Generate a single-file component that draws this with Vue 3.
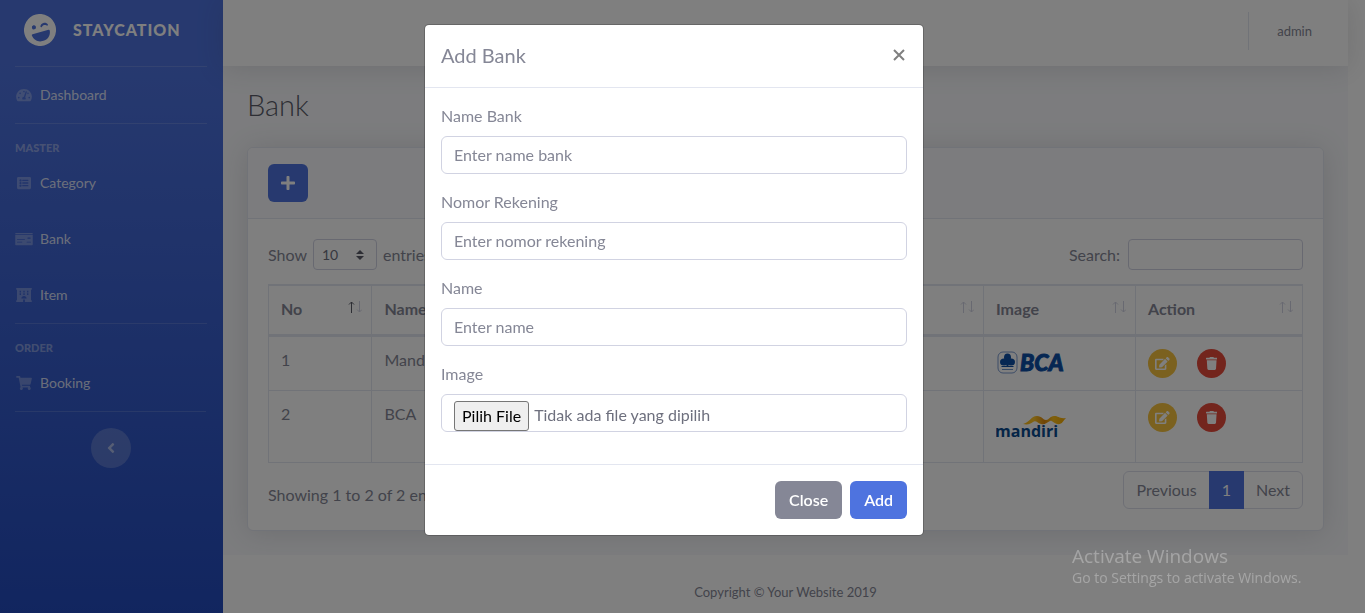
<script setup>
import { ref } from 'vue'

const icons = {
  gauge: { box: '0 0 576 512', d: 'M288 32C128.94 32 0 160.94 0 320c0 52.8 14.25 102.26 39.06 144.8 5.61 9.62 16.3 15.2 27.44 15.2h443c11.14 0 21.83-5.58 27.44-15.2C561.75 422.26 576 372.8 576 320c0-159.06-128.94-288-288-288zm0 64c14.71 0 26.58 10.13 30.32 23.65-1.11 2.26-2.64 4.23-3.45 6.67l-9.22 27.67c-5.13 3.49-10.97 6.01-17.64 6.01-17.67 0-32-14.33-32-32S270.33 96 288 96zM96 384c-17.67 0-32-14.33-32-32s14.33-32 32-32 32 14.33 32 32-14.33 32-32 32zm48-160c-17.67 0-32-14.33-32-32s14.33-32 32-32 32 14.33 32 32-14.33 32-32 32zm246.77-72.41l-61.33 184C343.13 347.33 352 364.54 352 384c0 11.72-3.38 22.55-8.88 32H232.88c-5.5-9.45-8.88-20.28-8.88-32 0-33.94 26.5-61.43 59.9-63.59l61.34-184.01c4.17-12.56 17.73-19.45 30.36-15.17 12.57 4.19 19.35 17.79 15.17 30.36zm14.66 57.2l15.52-46.55c3.47-1.29 7.13-2.23 11.05-2.23 17.67 0 32 14.33 32 32s-14.33 32-32 32c-11.38-.01-20.89-6.28-26.57-15.22zM480 384c-17.67 0-32-14.33-32-32s14.33-32 32-32 32 14.33 32 32-14.33 32-32 32z' },
  list: { box: '0 0 512 512', d: 'M48 32H464Q512 32 512 80V432Q512 480 464 480H48Q0 480 0 432V80Q0 32 48 32zM128 120a40 40 0 1 0 .1 0zM128 216a40 40 0 1 0 .1 0zM128 312a40 40 0 1 0 .1 0zM204 136H404Q416 136 416 148V172Q416 184 404 184H204Q192 184 192 172V148Q192 136 204 136zM204 232H404Q416 232 416 244V268Q416 280 404 280H204Q192 280 192 268V244Q192 232 204 232zM204 328H404Q416 328 416 340V364Q416 376 404 376H204Q192 376 192 364V340Q192 328 204 328z' },
  check: { box: '0 0 640 512', d: 'M24 32H616Q640 32 640 56V80H0V56Q0 32 24 32zM0 112H640V456Q640 480 616 480H24Q0 480 0 456zM448 208V240Q448 248 456 248H552Q560 248 560 240V208Q560 200 552 200H456Q448 200 448 208zM72 264H344Q352 264 352 272V280Q352 288 344 288H72Q64 288 64 280V272Q64 264 72 264zM72 360H248Q256 360 256 368V376Q256 384 248 384H72Q64 384 64 376V368Q64 360 72 360zM424 360H568Q576 360 576 368V376Q576 384 568 384H424Q416 384 416 376V368Q416 360 424 360z' },
  hotel: { box: '0 0 576 512', d: 'M16 0H560Q576 0 576 16V48Q576 64 560 64H544V448H560Q576 448 576 464V496Q576 512 560 512H320V432Q320 416 304 416H272Q256 416 256 432V512H16Q0 512 0 496V464Q0 448 16 448H32V64H16Q0 64 0 48V16Q0 0 16 0zM128 96V160H176V96zM264 96V160H312V96zM400 96V160H448V96zM128 192V256H176V192zM264 192V256H312V192zM400 192V256H448V192zM192 384H384C384 331 341 288 288 288S192 331 192 384z' },
  cart: { box: '0 0 576 512', d: 'M528.12 301.319l47.273-208C578.806 78.301 567.391 64 551.99 64H159.208l-9.166-44.81C147.758 8.021 137.93 0 126.529 0H24C10.745 0 0 10.745 0 24v16c0 13.255 10.745 24 24 24h69.883l70.248 343.435C147.325 417.1 136 435.222 136 456c0 30.928 25.072 56 56 56s56-25.072 56-56c0-15.674-6.447-29.835-16.824-40h209.647C430.447 426.165 424 440.326 424 456c0 30.928 25.072 56 56 56s56-25.072 56-56c0-22.172-12.888-41.332-31.579-50.405l5.517-24.276c3.413-15.018-8.002-29.319-23.403-29.319H218.117l-6.545-32h293.145c11.206 0 20.92-7.754 23.403-18.681z' },
  edit: { box: '0 0 576 512', d: 'M402.6 83.2l90.2 90.2c3.8 3.8 3.8 10 0 13.8L274.4 405.6l-92.8 10.3c-12.4 1.4-22.9-9.1-21.5-21.5l10.3-92.8L388.8 83.2c3.8-3.8 10-3.8 13.8 0zm162-22.9l-48.8-48.8c-15.2-15.2-39.9-15.2-55.2 0l-35.4 35.4c-3.8 3.8-3.8 10 0 13.8l90.2 90.2c3.8 3.8 10 3.8 13.8 0l35.4-35.4c15.2-15.3 15.2-40 0-55.2zM384 346.2V448H64V128h229.8c3.2 0 6.2-1.3 8.5-3.5l40-40c7.6-7.6 2.2-20.5-8.5-20.5H48C21.5 64 0 85.5 0 112v352c0 26.5 21.5 48 48 48h352c26.5 0 48-21.5 48-48V306.2c0-10.7-12.9-16-20.5-8.5l-40 40c-2.2 2.3-3.5 5.3-3.5 8.5z' },
  trash: { box: '0 0 448 512', d: 'M432 32H312l-9.4-18.7A24 24 0 0 0 281.1 0H166.8a23.72 23.72 0 0 0-21.4 13.3L136 32H16A16 16 0 0 0 0 48v32a16 16 0 0 0 16 16h416a16 16 0 0 0 16-16V48a16 16 0 0 0-16-16zM53.2 467a48 48 0 0 0 47.9 45h245.8a48 48 0 0 0 47.9-45L416 128H32z' }
}

const menu = [
  { heading: '', items: [{ label: 'Dashboard', icon: icons.gauge }] },
  {
    heading: 'Master',
    items: [
      { label: 'Category', icon: icons.list },
      { label: 'Bank', icon: icons.check },
      { label: 'Item', icon: icons.hotel }
    ]
  },
  { heading: 'Order', items: [{ label: 'Booking', icon: icons.cart }] }
]

const columns = [
  { label: 'No', cls: 'col-no', sorted: true },
  { label: 'Name', cls: 'col-name' },
  { label: 'Rekening', cls: 'col-number' },
  { label: 'Image', cls: 'col-image' },
  { label: 'Action', cls: 'col-action' }
]

const rows = [
  { no: 1, name: 'Mandiri', logo: 'bca' },
  { no: 2, name: 'BCA', logo: 'mandiri' }
]

const fields = [
  { id: 'nameBank', label: 'Name Bank', hint: 'Enter name bank' },
  { id: 'nomorRekening', label: 'Nomor Rekening', hint: 'Enter nomor rekening' },
  { id: 'name', label: 'Name', hint: 'Enter name' }
]

const open = ref(true)
const form = ref({ nameBank: '', nomorRekening: '', name: '' })
const fileName = ref('Tidak ada file yang dipilih')
const pickFile = (e) => {
  fileName.value = e.target.files[0]?.name ?? 'Tidak ada file yang dipilih'
}
</script>

<template>
  <div class="page">
    <nav class="sidebar">
      <a href="#" class="brand">
        <svg class="brand-icon" viewBox="0 0 496 496" aria-hidden="true">
          <g transform="rotate(-15 248 248)">
            <circle cx="248" cy="248" r="248" fill="#fff" />
            <circle class="cut" cx="168" cy="184" r="32" />
            <path class="cut" d="M268 198c4-25 34-42 60-42s56 17 60 42c2 11-11 18-20 11l-10-9c-14-13-46-13-60 0l-10 9c-9 7-22 0-20-11z" />
            <path class="cut" d="M120 280h256c10 0 17 8 16 18-9 76-67 126-136 126h-16c-69 0-127-50-136-126-1-10 6-18 16-18z" />
          </g>
        </svg>
        <span class="brand-text">STAYCATION</span>
      </a>
      <div v-for="group in menu" :key="group.heading" class="group">
        <h2 v-if="group.heading" class="heading">{{ group.heading }}</h2>
        <a v-for="item in group.items" :key="item.label" href="#" class="nav-link">
          <svg class="nav-icon" :viewBox="item.icon.box" aria-hidden="true">
            <path fill-rule="evenodd" :d="item.icon.d" />
          </svg>
          <span>{{ item.label }}</span>
        </a>
      </div>
      <div class="group toggle-row">
        <button type="button" class="toggle" aria-label="Collapse sidebar">
          <svg viewBox="0 0 256 512" aria-hidden="true">
            <path d="M31.7 239l136-136c9.4-9.4 24.6-9.4 33.9 0l22.6 22.6c9.4 9.4 9.4 24.6 0 33.9L127.9 256l96.4 96.4c9.4 9.4 9.4 24.6 0 33.9L201.7 409c-9.4 9.4-24.6 9.4-33.9 0l-136-136c-9.5-9.4-9.5-24.6-.1-34z" />
          </svg>
        </button>
      </div>
    </nav>

    <div class="content">
      <header class="topbar">
        <span class="topbar-divider"></span>
        <a href="#" class="user">admin</a>
      </header>

      <main class="main">
        <h1 class="title">Bank</h1>
        <section class="card">
          <div class="card-header">
            <button type="button" class="btn primary add" aria-label="Add bank" @click="open = true">
              <svg viewBox="0 0 448 512" aria-hidden="true">
                <path d="M416 208H272V64c0-17.67-14.33-32-32-32h-32c-17.67 0-32 14.33-32 32v144H32c-17.67 0-32 14.33-32 32v32c0 17.67 14.33 32 32 32h144v144c0 17.67 14.33 32 32 32h32c17.67 0 32-14.33 32-32V304h144c17.67 0 32-14.33 32-32v-32c0-17.67-14.33-32-32-32z" />
              </svg>
            </button>
          </div>
          <div class="card-body">
            <div class="tools">
              <label class="tool">
                Show
                <select class="length">
                  <option>10</option>
                  <option>25</option>
                  <option>50</option>
                  <option>100</option>
                </select>
                entries
              </label>
              <label class="tool search-tool">Search: <input type="search" class="search" /></label>
            </div>
            <table class="table">
              <thead>
                <tr>
                  <th v-for="c in columns" :key="c.label" :class="c.cls">
                    <div class="th-inner">
                      {{ c.label }}
                      <svg class="sort" viewBox="0 0 14 12" aria-hidden="true">
                        <path :class="{ on: c.sorted }" d="M3.5 12V1M1 3.5L3.5 1L6 3.5" />
                        <path d="M11.5 0V11M9 8.5L11.5 11L14 8.5" />
                      </svg>
                    </div>
                  </th>
                </tr>
              </thead>
              <tbody>
                <tr v-for="r in rows" :key="r.no">
                  <td>{{ r.no }}</td>
                  <td>{{ r.name }}</td>
                  <td></td>
                  <td>
                    <svg v-if="r.logo === 'bca'" class="logo-bca" viewBox="0 0 70 28" role="img" aria-label="BCA">
                      <rect x="2" y="3" width="19" height="21" rx="5" fill="none" stroke="#7b9bd0" />
                      <g fill="#0d4fa6">
                        <ellipse cx="11.5" cy="8.5" rx="3.5" ry="4" />
                        <ellipse cx="8" cy="13" rx="4" ry="3.5" />
                        <ellipse cx="15" cy="13" rx="4" ry="3.5" />
                        <path d="M10.5 11h2v6h5v1h-12v-1h5z" />
                        <path d="M6 20h11v1H6z" opacity=".6" />
                      </g>
                      <text x="24" y="22" class="bca-text">BCA</text>
                    </svg>
                    <svg v-else class="logo-mandiri" viewBox="0 0 70 47" role="img" aria-label="mandiri">
                      <defs>
                        <linearGradient id="ribbon">
                          <stop offset="0" stop-color="#f9b612" />
                          <stop offset=".25" stop-color="#ffc629" />
                          <stop offset=".5" stop-color="#e08a0c" />
                          <stop offset=".7" stop-color="#ffc21a" />
                          <stop offset="1" stop-color="#f5a800" />
                        </linearGradient>
                      </defs>
                      <path fill="url(#ribbon)" d="M27 21C33 20 35 13 41 13C46 13 47 17 50 17C53 17 54 13 58 13C63 13 63 16 70 15C67 18 66 22 61 21C57 20 56 17 54 18C50 20 49 22 45 21C41 20 40 17 37 19C34 21 32 22 27 21z" />
                      <text x="-1" y="34" class="mandiri-text">mandiri</text>
                    </svg>
                  </td>
                  <td>
                    <div class="actions">
                      <button type="button" class="circle edit" aria-label="Edit">
                        <svg :viewBox="icons.edit.box" aria-hidden="true"><path :d="icons.edit.d" /></svg>
                      </button>
                      <button type="button" class="circle delete" aria-label="Delete">
                        <svg :viewBox="icons.trash.box" aria-hidden="true"><path :d="icons.trash.d" /></svg>
                      </button>
                    </div>
                  </td>
                </tr>
              </tbody>
            </table>
            <div class="summary">
              <span>Showing 1 to 2 of 2 entries</span>
              <div class="pager">
                <a href="#">Previous</a>
                <a href="#" class="current">1</a>
                <a href="#">Next</a>
              </div>
            </div>
          </div>
        </section>
      </main>

      <footer class="footer">Copyright © Your Website 2019</footer>
    </div>

    <div v-if="open" class="backdrop">
      <form class="modal" role="dialog" aria-labelledby="modalTitle" @submit.prevent="open = false">
        <div class="modal-header">
          <h2 id="modalTitle" class="modal-title">Add Bank</h2>
          <button type="button" class="close" aria-label="Dismiss" @click="open = false">
            <svg viewBox="0 0 12 12" aria-hidden="true"><path d="M1 1L11 11M11 1L1 11" /></svg>
          </button>
        </div>
        <div class="modal-body">
          <div v-for="f in fields" :key="f.id" class="field">
            <label :for="f.id">{{ f.label }}</label>
            <input :id="f.id" v-model="form[f.id]" type="text" class="control" :placeholder="f.hint" />
          </div>
          <div class="field">
            <label for="image">Image</label>
            <div class="control file">
              <span class="file-button">Pilih File</span>
              <span>{{ fileName }}</span>
              <input id="image" type="file" class="file-input" @change="pickFile" />
            </div>
          </div>
        </div>
        <div class="modal-footer">
          <button type="button" class="btn secondary" @click="open = false">Close</button>
          <button type="submit" class="btn primary">Add</button>
        </div>
      </form>
    </div>

    <div class="watermark">
      <div class="watermark-title">Activate Windows</div>
      <div class="watermark-text">Go to Settings to activate Windows.</div>
    </div>
  </div>
</template>

<style>
html,
body {
  overflow: hidden;
  background: #fff;
}
</style>

<style scoped>
*,
*::before,
*::after {
  box-sizing: border-box;
}
.page {
  display: flex;
  height: 100vh;
  padding-right: 17px;
  align-items: flex-start;
  font: 400 16px/24px Lato, "Liberation Sans", sans-serif;
  color: #858796;
}
a {
  text-decoration: none;
  color: inherit;
}
button,
input,
select {
  font: inherit;
  margin: 0;
}
button {
  cursor: pointer;
}
h1,
h2 {
  margin: 0;
}

.sidebar {
  flex: 0 0 223px;
  min-height: 631px;
  background: linear-gradient(180deg, #4e73df 10%, #224abe 100%);
}
.brand {
  display: flex;
  align-items: center;
  height: 66px;
  padding: 0 24px 6px;
  gap: 17px;
  color: #fff;
}
.brand-icon {
  width: 32px;
  height: 32px;
}
.cut {
  fill: #4e73df;
}
.brand-text {
  font-weight: 900;
  letter-spacing: 1px;
}
.group {
  padding-top: 1px;
}
.group::before {
  content: "";
  display: block;
  height: 1px;
  margin: -1px 16px 0 15px;
  background: rgba(255, 255, 255, 0.15);
}
.heading {
  padding: 16px 15px 0;
  font-size: 11px;
  line-height: 15px;
  font-weight: 900;
  text-transform: uppercase;
  color: rgba(255, 255, 255, 0.4);
}
.nav-link {
  display: flex;
  align-items: center;
  gap: 7px;
  height: 56px;
  padding: 0 15px;
  font-size: 14px;
  color: rgba(255, 255, 255, 0.8);
}
.nav-icon {
  width: 18px;
  height: 14px;
  fill: rgba(255, 255, 255, 0.3);
}
.toggle-row {
  padding-right: 1px;
  text-align: center;
}
.toggle {
  display: inline-flex;
  align-items: center;
  justify-content: center;
  width: 40px;
  height: 40px;
  margin-top: 16px;
  padding: 0;
  border: 0;
  border-radius: 50%;
  background: rgba(255, 255, 255, 0.2);
}
.toggle svg {
  height: 16px;
  fill: rgba(255, 255, 255, 0.5);
}

.content {
  flex: 1;
  min-width: 0;
  background: #f8f9fc;
}
.topbar {
  display: flex;
  align-items: center;
  justify-content: flex-end;
  height: 66px;
  padding: 0 36px 5px;
  gap: 28px;
  background: #fff;
  box-shadow: 0 2px 28px rgba(58, 59, 69, 0.15);
  font-size: 13px;
}
.topbar-divider {
  width: 1px;
  height: 38px;
  background: #e3e6f0;
}
.main {
  padding: 22px 24px 24px;
}
.title {
  font-size: 29px;
  line-height: 34px;
  font-weight: 300;
  color: #5a5c69;
}
.card {
  margin-top: 25px;
  border: 1px solid #e3e6f0;
  border-radius: 6px;
  background: #fff;
  box-shadow: 0 2px 28px rgba(58, 59, 69, 0.15);
}
.card-header {
  padding: 16px 20px;
  border-bottom: 1px solid #e3e6f0;
  border-radius: 5px 5px 0 0;
  background: #f8f9fc;
}
.btn {
  height: 38px;
  padding: 0 14px;
  border: 0;
  border-radius: 6px;
  color: #fff;
  font-weight: 600;
}
.primary {
  background: #4e73df;
}
.secondary {
  background: #858796;
}
.add {
  display: flex;
  align-items: center;
  padding: 0 13px;
}
.add svg {
  width: 14px;
  height: 16px;
  fill: #fff;
}
.card-body {
  padding: 20px 20px 21px;
}
.tools,
.summary {
  display: flex;
  justify-content: space-between;
}
.tool {
  display: flex;
  align-items: center;
  gap: 6px;
}
.search-tool {
  gap: 8px;
}
.length,
.search {
  height: 31px;
  border: 1px solid #d1d3e2;
  border-radius: 4px;
  font-size: 14px;
  color: #6e707e;
}
.length {
  width: 64px;
  padding: 0 8px;
  appearance: none;
  background: #fff url("data:image/svg+xml,%3Csvg xmlns='http://www.w3.org/2000/svg' viewBox='0 0 4 5'%3E%3Cpath fill='%235a5c69' d='M2 0L0 2h4zm0 5L0 3h4z'/%3E%3C/svg%3E") no-repeat right 12px center / 8px 10px;
}
.search {
  width: 175px;
  padding: 0 8px;
  background: #fff;
}
.table {
  width: 100%;
  margin-top: 14px;
  table-layout: fixed;
  border: 1px solid #e3e6f0;
  border-left: 0;
  border-spacing: 0;
}
th,
td {
  padding: 11px 12px 12px;
  border: 0 solid #e3e6f0;
  border-width: 1px 0 0 1px;
  text-align: left;
  vertical-align: top;
}
th {
  padding-bottom: 13px;
  border-bottom-width: 2px;
  font-weight: 700;
}
.col-no {
  width: 10%;
}
.col-image {
  width: 152px;
}
.col-action {
  width: 167px;
}
.th-inner {
  display: flex;
  justify-content: space-between;
}
.sort {
  width: 14px;
  height: 12px;
  margin: 4px -3px 0 0;
  fill: none;
  stroke: #d1d3e2;
}
.sort .on {
  stroke: #5a5c69;
}
.logo-bca,
.logo-mandiri {
  display: block;
  width: 70px;
  margin-top: 1px;
}
.logo-bca {
  height: 28px;
}
.logo-mandiri {
  height: 47px;
}
.bca-text {
  font: italic 900 23px Lato, sans-serif;
  fill: #0d4fa6;
  stroke: #0d4fa6;
}
.mandiri-text {
  font: 700 16px "Open Sans", sans-serif;
  fill: #0b4a8f;
}
.actions {
  display: flex;
  gap: 20px;
  padding-top: 1px;
}
.circle {
  display: flex;
  align-items: center;
  justify-content: center;
  width: 29px;
  height: 29px;
  padding: 0;
  border: 0;
  border-radius: 50%;
}
.circle svg {
  height: 13px;
  fill: #fff;
}
.edit {
  background: #f6c23e;
}
.delete {
  background: #e74a3b;
}
.summary {
  align-items: center;
  padding-top: 8px;
}
.summary > span {
  padding-top: 9px;
}
.pager {
  display: flex;
  border: 1px solid #dddfeb;
  border-radius: 6px;
}
.pager a {
  padding: 6px 12px;
}
.pager .current {
  margin: -1px 0;
  padding: 7px 13px;
  background: #4e73df;
  color: #fff;
}
.footer {
  padding: 24px 0;
  background: #fff;
  text-align: center;
  font-size: 13px;
  line-height: 27px;
}

.backdrop {
  position: fixed;
  inset: 0;
  display: flex;
  align-items: flex-start;
  justify-content: center;
  padding: 24px 17px 24px 0;
  background: rgba(0, 0, 0, 0.5);
}
.modal {
  width: 500px;
  border: 1px solid rgba(0, 0, 0, 0.2);
  border-radius: 5px;
  background: #fff;
  background-clip: padding-box;
}
.modal-header {
  display: flex;
  align-items: flex-start;
  justify-content: space-between;
  padding: 15px 16px 17px;
  border-bottom: 1px solid #e3e6f0;
}
.modal-title {
  font-size: 20px;
  line-height: 30px;
  font-weight: 400;
}
.close {
  display: flex;
  padding: 9px 2px;
  border: 0;
  background: none;
}
.close svg {
  width: 12px;
  height: 12px;
  fill: none;
  stroke: #7f7f7f;
  stroke-width: 2;
}
.modal-body {
  padding: 16px;
}
.field {
  display: flex;
  flex-direction: column;
  gap: 8px;
  margin-bottom: 16px;
}
.control {
  width: 100%;
  height: 38px;
  padding: 5px 12px 7px;
  border: 1px solid #d1d3e2;
  border-radius: 6px;
  background: #fff;
  color: #6e707e;
}
.control::placeholder {
  color: #858796;
  opacity: 1;
}
.file {
  position: relative;
  display: flex;
  align-items: flex-start;
  gap: 5px;
  padding-top: 6px;
  line-height: 28px;
  overflow: hidden;
}
.file-button {
  height: 30px;
  padding: 0 7px;
  border: 1px solid #767676;
  border-radius: 3px;
  background: #efefef;
  color: #000;
  line-height: 27px;
}
.file-input {
  position: absolute;
  inset: 0;
  opacity: 0;
}
.modal-footer {
  display: flex;
  justify-content: flex-end;
  gap: 8px;
  padding: 16px;
  border-top: 1px solid #e3e6f0;
}

.watermark {
  position: fixed;
  right: 56px;
  bottom: 25px;
  width: 237px;
  font-family: "Open Sans", sans-serif;
  color: rgba(255, 255, 255, 0.3);
  white-space: nowrap;
  pointer-events: none;
}
.watermark-title {
  font-size: 19px;
  line-height: 24px;
}
.watermark-text {
  font-size: 14px;
  line-height: 20px;
}
</style>
